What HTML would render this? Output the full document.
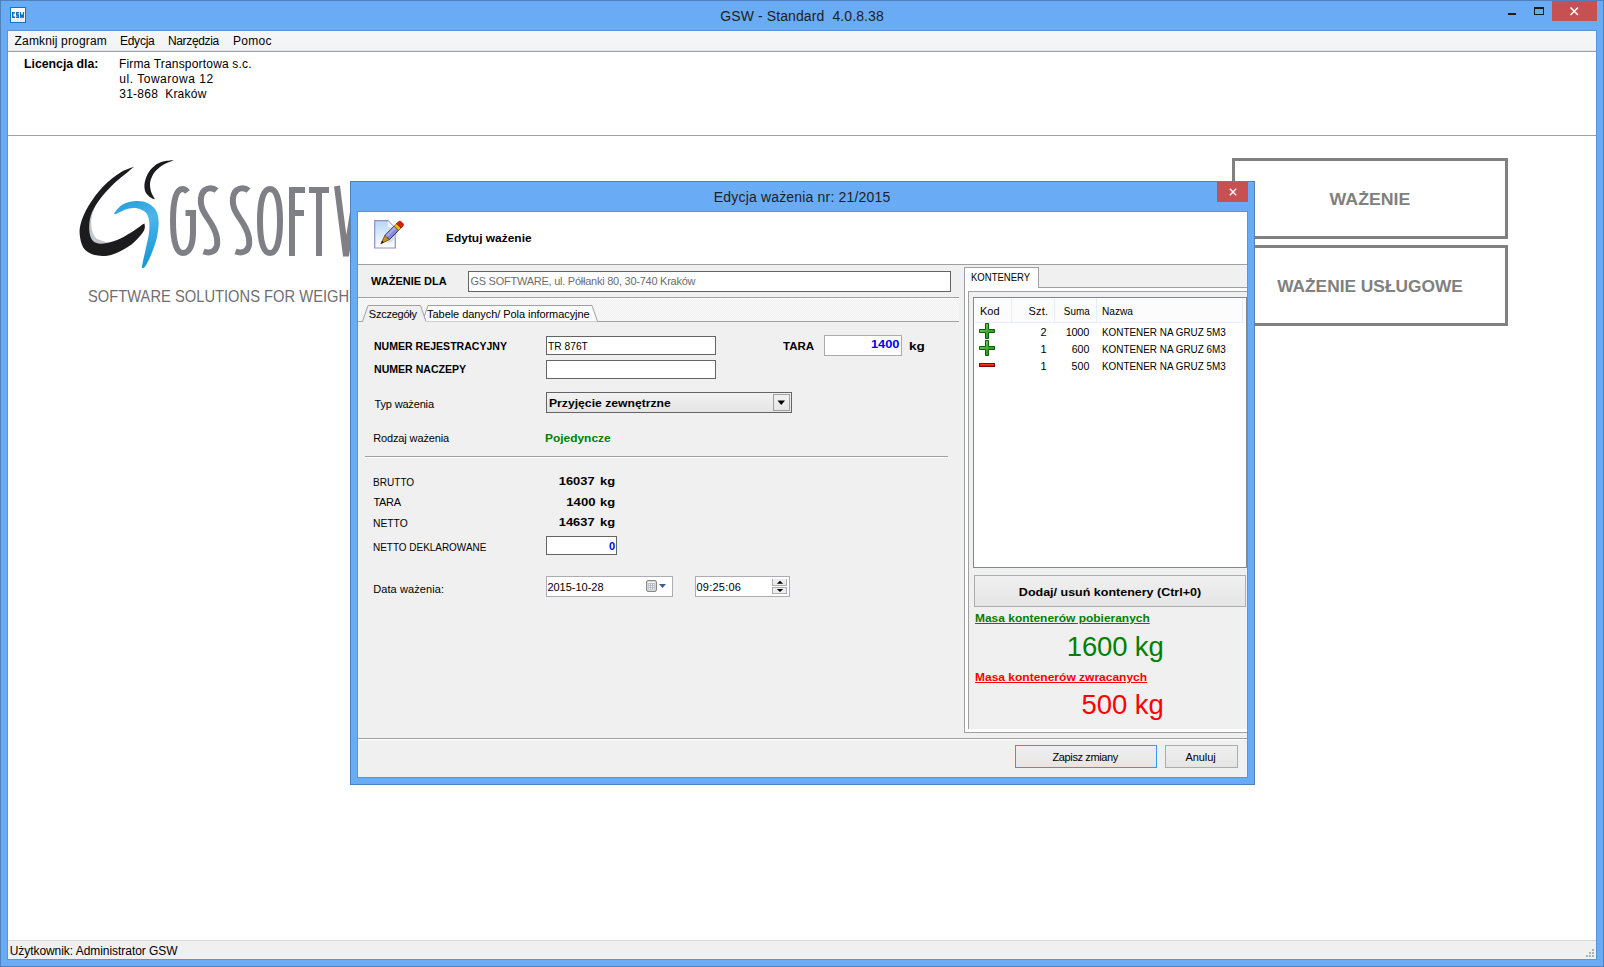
<!DOCTYPE html>
<html><head><meta charset="utf-8">
<style>
html,body{margin:0;padding:0;width:1604px;height:967px;overflow:hidden;background:#fff;}
body{position:relative;font-family:"Liberation Sans", sans-serif;}
.t{position:absolute;white-space:pre;}
.r{position:absolute;}
</style></head><body>
<div class="r" style="left:0px;top:0px;width:1604px;height:967px;background:#6aabf5;box-shadow:inset 0 0 0 1px #5081bb;"></div>
<div class="r" style="left:10px;top:7px;width:16px;height:16px;background:linear-gradient(#fff 40%,#e6e6e6);box-shadow:inset 0 0 0 1px #0a78c8;"></div>
<svg class="r" style="left:10px;top:7px" width="16" height="16" viewBox="10 7 16 16"><g fill="none" stroke="#0b6fc6" stroke-width="1.5"><path d="M15,12.75 H12.75 V17.25 H15"/><path d="M19,12.75 H16.75 V15 H18.25 V17.25 H16"/><path d="M20.4,12 L20.8,18 L22,15.2 L23.2,18 L23.6,12" stroke-width="1.3"/></g></svg>
<div class="t" style="top:6.65px;font-size:14px;line-height:18px;color:#1e1e1e;letter-spacing:0.100px;left:502.05px;width:600px;text-align:center;">GSW - Standard&nbsp; 4.0.8.38</div>
<div class="r" style="left:1508px;top:13px;width:8px;height:2px;background:#1a1a1a;"></div>
<div class="r" style="left:1534px;top:7px;width:10px;height:8px;box-sizing:border-box;border:1px solid #1a1a1a;border-top-width:2px;"></div>
<div class="r" style="left:1552px;top:1px;width:45px;height:20px;background:#c75050;"></div>
<svg class="r" style="left:1567px;top:4px" width="14" height="14" viewBox="0 0 14 14"><path d="M3.5 3.5 L11 11 M11 3.5 L3.5 11" stroke="#fff" stroke-width="1.5"/></svg>
<div class="r" style="left:8px;top:31px;width:1588px;height:928px;background:#fff;box-shadow:0 0 0 1px #5b93d6;"></div>
<div class="r" style="left:8px;top:31px;width:1588px;height:20px;background:linear-gradient(#f5f6f7,#f2f3f5);"></div>
<div class="r" style="left:8px;top:50px;width:1588px;height:1px;background:#e3e4e6;"></div>
<div class="r" style="left:8px;top:51px;width:1588px;height:1px;background:#a0a0a0;"></div>
<div class="t" style="top:34.34px;font-size:12px;line-height:15px;color:#000;letter-spacing:0.150px;left:14.58px;">Zamknij program</div>
<div class="t" style="top:34.34px;font-size:12px;line-height:15px;color:#000;letter-spacing:-0.219px;left:119.88px;">Edycja</div>
<div class="t" style="top:34.34px;font-size:12px;line-height:15px;color:#000;letter-spacing:-0.325px;left:167.88px;">Narzędzia</div>
<div class="t" style="top:34.34px;font-size:12px;line-height:15px;color:#000;letter-spacing:0.349px;left:232.88px;">Pomoc</div>
<div class="t" style="top:57.34px;font-size:12px;line-height:15px;color:#000;font-weight:bold;left:23.61px;transform:scaleX(1.0241);transform-origin:left;">Licencja dla:</div>
<div class="t" style="top:57.34px;font-size:12px;line-height:15px;color:#000;letter-spacing:0.181px;left:118.88px;">Firma Transportowa s.c.</div>
<div class="t" style="top:71.94px;font-size:12px;line-height:15px;color:#000;letter-spacing:0.538px;left:119.23px;">ul. Towarowa 12</div>
<div class="t" style="top:86.84px;font-size:12px;line-height:15px;color:#000;letter-spacing:0.229px;left:119.31px;">31-868&nbsp; Kraków</div>
<div class="r" style="left:8px;top:135px;width:1588px;height:1px;background:#a0a0a0;"></div>
<div class="r" style="left:8px;top:940px;width:1588px;height:1px;background:#d7d7d7;"></div>
<div class="r" style="left:8px;top:941px;width:1588px;height:18px;background:#f0f0f0;"></div>
<div class="t" style="top:943.74px;font-size:12px;line-height:15px;color:#000;letter-spacing:-0.051px;left:9.65px;">Użytkownik: Administrator GSW</div>
<div class="r" style="left:1592px;top:949px;width:2px;height:2px;background:#b0b0b0;"></div>
<div class="r" style="left:1589px;top:952px;width:2px;height:2px;background:#b0b0b0;"></div>
<div class="r" style="left:1592px;top:952px;width:2px;height:2px;background:#b0b0b0;"></div>
<div class="r" style="left:1586px;top:955px;width:2px;height:2px;background:#b0b0b0;"></div>
<div class="r" style="left:1589px;top:955px;width:2px;height:2px;background:#b0b0b0;"></div>
<div class="r" style="left:1592px;top:955px;width:2px;height:2px;background:#b0b0b0;"></div>
<svg class="r" style="left:0;top:140px" width="360" height="140" viewBox="0 140 360 140">
<defs><linearGradient id="bl" x1="0" y1="0" x2="0.3" y2="1"><stop offset="0" stop-color="#1f9bd9"/><stop offset="0.45" stop-color="#4fb5e8"/><stop offset="1" stop-color="#1c9ad8"/></linearGradient></defs>
<path d="M96.0,205.0 C95.2,206.3 91.8,211.2 90.5,215.0 C89.2,218.8 88.3,224.1 88.5,228.0 C88.7,231.9 89.9,235.9 91.5,238.5 C93.1,241.1 94.9,242.7 98.0,243.5 C101.1,244.3 109.0,243.8 110.0,243.5 C111.0,243.2 106.3,242.4 104.0,241.5 C101.7,240.6 98.0,239.9 96.0,238.0 C94.0,236.1 92.8,233.3 92.0,230.0 C91.2,226.7 91.0,221.8 91.5,218.0 C92.0,214.2 94.2,209.2 95.0,207.0 C95.8,204.8 96.8,203.7 96.0,205.0 Z" fill="#c3c7cd"/>
<path d="M134.2,166.8 C132.1,167.6 125.6,169.3 120.5,172.5 C115.4,175.7 108.7,180.7 103.4,186.2 C98.1,191.7 92.5,199.2 88.7,205.5 C84.9,211.8 82.1,218.4 80.7,223.7 C79.3,229.0 79.3,233.0 80.1,237.4 C80.8,241.8 82.2,246.9 85.2,249.9 C88.2,252.9 93.2,254.8 97.8,255.6 C102.3,256.4 107.4,255.9 112.5,254.4 C117.6,252.9 124.1,249.3 128.5,246.5 C132.9,243.7 136.1,240.2 138.7,237.4 C141.3,234.7 143.2,232.2 144.2,230.0 C145.2,227.8 144.8,225.5 144.6,224.5 C144.4,223.5 145.0,223.0 143.3,224.0 C141.6,225.0 138.0,228.1 134.2,230.5 C130.4,232.9 125.0,236.4 120.5,238.5 C116.0,240.6 110.9,242.3 106.9,243.1 C102.9,243.9 99.3,244.0 96.6,243.1 C93.9,242.2 92.1,240.2 90.9,237.4 C89.7,234.6 89.0,230.2 89.2,226.0 C89.4,221.8 90.0,217.1 92.0,212.3 C94.0,207.6 97.4,202.4 101.2,197.5 C105.0,192.6 110.2,187.2 114.8,182.8 C119.3,178.5 125.5,174.0 128.5,171.4 C131.5,168.8 132.1,168.3 133.0,167.5 C133.9,166.7 136.3,166.0 134.2,166.8 Z" fill="#1c1b1d"/>
<path d="M173.5,160.2 C172.7,160.0 166.2,160.6 163.0,161.5 C159.8,162.4 157.1,163.7 154.6,165.7 C152.1,167.7 149.5,170.5 147.8,173.7 C146.1,176.9 144.6,181.6 144.4,185.0 C144.2,188.4 145.0,191.7 146.7,194.1 C148.4,196.5 153.8,199.7 154.6,199.3 C155.3,198.9 151.9,194.7 151.2,191.9 C150.4,189.2 149.7,185.8 150.1,182.8 C150.5,179.8 151.8,176.4 153.5,173.7 C155.2,171.0 157.9,168.7 160.3,166.8 C162.7,164.9 165.8,163.6 168.0,162.5 C170.2,161.4 174.3,160.4 173.5,160.2 Z" fill="#1c1b1d"/>
<path d="M114.8,212.3 C116.1,210.7 119.2,206.3 122.8,204.4 C126.4,202.5 132.2,201.2 136.4,201.0 C140.6,200.8 144.6,201.7 147.8,203.2 C151.0,204.7 154.0,207.1 155.8,210.1 C157.6,213.1 158.4,216.8 158.6,221.4 C158.8,226.0 158.1,231.9 156.9,237.4 C155.7,242.9 153.1,249.6 151.2,254.4 C149.3,259.2 146.9,263.7 145.5,266.0 C144.1,268.3 143.1,268.0 142.5,268.0 C141.9,268.0 141.6,268.8 142.1,265.8 C142.6,262.8 144.3,255.4 145.5,249.9 C146.7,244.4 148.4,237.7 149.0,232.8 C149.6,227.9 149.6,223.7 149.0,220.3 C148.4,216.9 147.4,214.3 145.5,212.3 C143.6,210.3 140.6,209.0 137.6,208.4 C134.6,207.8 130.5,208.2 127.3,208.9 C124.1,209.7 120.2,212.0 118.2,212.9 C116.2,213.8 115.8,214.3 115.2,214.2 C114.6,214.1 113.5,213.9 114.8,212.3 Z" fill="url(#bl)"/>
<g fill="none" stroke="#7e8085" stroke-width="6">
<path d="M187.5,192 C185.5,189.5 184,189 182.5,189 C176,189 173,201 173,221 C173,244 177,253 183,253 C189,253 193,246 193,232 L193,213 L185.5,213"/>
<path d="M216.5,190.5 C213,187.5 208,187.5 205,190 C201,193 200,200 201.5,206 C203,213 208,218 212,225 C216,232 218,238 217,245 C216,251 211,254 203.5,251.5"/>
<path d="M248.5,190.5 C245,187.5 240,187.5 237,190 C233,193 232,200 233.5,206 C235,213 240,218 244,225 C248,232 250,238 249,245 C248,251 243,254 235.5,251.5"/>
<path d="M270,189 C276.8,189 280,201 280,221 C280,241 276.8,253 270,253 C263.2,253 260,241 260,221 C260,201 263.2,189 270,189 Z"/>
<path d="M292,256 V190 H305 M292,213 H304"/>
<path d="M309,190 H329 M319,190 V256"/>
<path d="M337,186 L346,256 L353,212"/>
</g>
</svg>
<div class="t" style="top:285.58px;font-size:16.5px;line-height:21px;color:#6e6e6e;left:88.40px;transform:scaleX(0.892);transform-origin:left;">SOFTWARE SOLUTIONS FOR WEIGHING</div>
<div class="r" style="left:1232px;top:158px;width:276px;height:81px;box-sizing:border-box;border:3px solid #808080;background:#fff;"></div>
<div class="r" style="left:1232px;top:245px;width:276px;height:81px;box-sizing:border-box;border:3px solid #808080;background:#fff;"></div>
<div class="t" style="top:188.78px;font-size:16.5px;line-height:21px;color:#808080;font-weight:bold;left:1070.00px;width:600px;text-align:center;transform:scaleX(1.0745);transform-origin:center;">WAŻENIE</div>
<div class="t" style="top:275.78px;font-size:16.5px;line-height:21px;color:#808080;font-weight:bold;left:1070.00px;width:600px;text-align:center;transform:scaleX(1.0498);transform-origin:center;">WAŻENIE USŁUGOWE</div>
<div class="r" style="left:350px;top:181px;width:905px;height:604px;background:#6aabf5;box-shadow:inset 0 0 0 1px #5081bb;"></div>
<div class="t" style="top:187.55px;font-size:14px;line-height:18px;color:#1e1e1e;letter-spacing:0.174px;left:502.09px;width:600px;text-align:center;">Edycja ważenia nr: 21/2015</div>
<div class="r" style="left:1217px;top:182px;width:31px;height:20px;background:#c75050;"></div>
<svg class="r" style="left:1227px;top:186px" width="12" height="12" viewBox="0 0 12 12"><path d="M2.8 2.8 L9.2 9.2 M9.2 2.8 L2.8 9.2" stroke="#fff" stroke-width="1.45"/></svg>
<div class="r" style="left:358px;top:212px;width:889px;height:565px;background:#f0f0f0;box-shadow:0 0 0 1px #5b93d6;"></div>
<div class="r" style="left:358px;top:212px;width:889px;height:52px;background:#fff;"></div>
<div class="r" style="left:358px;top:264px;width:889px;height:1px;background:#a0a0a0;"></div>
<div class="t" style="top:231.32px;font-size:11.5px;line-height:14px;color:#000;font-weight:bold;left:446.21px;transform:scaleX(1.0383);transform-origin:left;">Edytuj ważenie</div>
<svg class="r" style="left:370px;top:216px" width="40" height="38" viewBox="370 216 40 38">
<defs><linearGradient id="dg" x1="0" y1="0" x2="0" y2="1"><stop offset="0" stop-color="#b6d6f8"/><stop offset="1" stop-color="#ffffff"/></linearGradient>
<linearGradient id="pg" x1="0" y1="0" x2="1" y2="1"><stop offset="0" stop-color="#a8aaf0"/><stop offset="1" stop-color="#6e70b8"/></linearGradient></defs>
<path d="M374.7,220.7 H387.8 L395.3,228.2 V248 H374.7 Z" fill="url(#dg)" stroke="#8e90c2" stroke-width="1.2"/>
<path d="M387.8,221 L388,227 L394.5,227.8 Z" fill="#f4f8fd"/>
<path d="M386,243 L398,231 L396,237 L391,242 Z" fill="#c8ccd6" opacity="0.6"/>
<path d="M380.80,243.80 L384.97,235.24 L389.36,239.63 Z" fill="#c8901c" stroke="#5a3a08" stroke-width="0.7"/>
<path d="M380.80,243.80 L382.28,240.76 L383.84,242.32 Z" fill="#111"/>
<path d="M384.97,235.24 L394.16,226.05 L398.55,230.44 L389.36,239.63 Z" fill="url(#pg)" stroke="#2c2c60" stroke-width="0.9"/>
<path d="M385.54,235.81 L394.73,226.62 L396.14,228.03 L386.95,237.22 Z" fill="#b4b6f4" opacity="0.7"/>
<path d="M394.16,226.05 L396.64,223.58 L401.02,227.96 L398.55,230.44 Z" fill="#f5b800" stroke="#6a4a00" stroke-width="0.7"/>
<path d="M396.64,223.58 L398.76,221.46 L400.60,221.17 L403.43,224.00 L403.14,225.84 L401.02,227.96 Z" fill="#e01c00" stroke="#701000" stroke-width="0.7"/>
</svg>
<div class="t" style="top:274.19px;font-size:11px;line-height:14px;color:#000;font-weight:bold;left:370.78px;transform:scaleX(0.9983);transform-origin:left;">WAŻENIE DLA</div>
<div class="r" style="left:468px;top:271px;width:483px;height:21px;box-sizing:border-box;border:1px solid #646464;background:#fff;"></div>
<div class="t" style="top:274.19px;font-size:11px;line-height:14px;color:#6d6d6d;letter-spacing:-0.248px;left:470.39px;">GS SOFTWARE, ul. Półłanki 80, 30-740 Kraków</div>
<div class="r" style="left:358px;top:297px;width:601px;height:25px;background-color:#f0f0f0;background-image:repeating-conic-gradient(#fafafa 0 25%, #f0f0f0 0 50%);background-size:2px 2px;"></div>
<div class="r" style="left:358px;top:297px;width:601px;height:1px;background:#a0a0a0;"></div>
<div class="r" style="left:358px;top:298px;width:601px;height:1px;background:#fcfcfc;"></div>
<div class="r" style="left:358px;top:321px;width:601px;height:1px;background:#a0a0a0;"></div>
<svg class="r" style="left:358px;top:304px" width="260" height="19" viewBox="0 0 260 19"><path d="M64.5,17.5 L70,1.5 L234,1.5 L239.5,17.5 Z" fill="#fbfbfb" stroke="none"/><path d="M64.5,17.5 L70,1.5 L234,1.5 L239.5,17.5" fill="none" stroke="#a0a0a0" stroke-width="1"/><path d="M4.5,18 L10,1.5 L62.5,1.5 L68.5,18 Z" fill="#f0f0f0" stroke="none"/><path d="M4.5,17.5 L10,1.5 L62.5,1.5 L68,17.5" fill="none" stroke="#a0a0a0" stroke-width="1"/></svg>
<div class="t" style="top:306.69px;font-size:11px;line-height:14px;color:#000;letter-spacing:-0.259px;left:368.86px;">Szczegóły</div>
<div class="t" style="top:306.69px;font-size:11px;line-height:14px;color:#000;letter-spacing:-0.062px;left:427.11px;">Tabele danych/ Pola informacyjne</div>
<div class="t" style="top:339.19px;font-size:11px;line-height:14px;color:#000;font-weight:bold;left:374.30px;transform:scaleX(0.9583);transform-origin:left;">NUMER REJESTRACYJNY</div>
<div class="r" style="left:546px;top:336px;width:170px;height:19px;box-sizing:border-box;border:1px solid #646464;background:#fff;"></div>
<div class="t" style="top:338.69px;font-size:11px;line-height:14px;color:#000;left:547.54px;transform:scaleX(0.9306);transform-origin:left;">TR 876T</div>
<div class="t" style="top:339.19px;font-size:11px;line-height:14px;color:#000;font-weight:bold;left:783.27px;transform:scaleX(1.0470);transform-origin:left;">TARA</div>
<div class="r" style="left:824px;top:335px;width:78px;height:21px;box-sizing:border-box;border:1px solid #ababab;background:#fff;"></div>
<div class="t" style="top:337.19px;font-size:11px;line-height:14px;color:#0000ff;font-weight:bold;right:704.77px;text-align:right;transform:scaleX(1.1658);transform-origin:right;">1400</div>
<div class="t" style="top:339.19px;font-size:11px;line-height:14px;color:#000;font-weight:bold;left:909.07px;transform:scaleX(1.2302);transform-origin:left;">kg</div>
<div class="t" style="top:362.19px;font-size:11px;line-height:14px;color:#000;font-weight:bold;left:374.30px;transform:scaleX(0.9605);transform-origin:left;">NUMER NACZEPY</div>
<div class="r" style="left:546px;top:360px;width:170px;height:19px;box-sizing:border-box;border:1px solid #646464;background:#fff;"></div>
<div class="t" style="top:396.59px;font-size:11px;line-height:14px;color:#000;letter-spacing:-0.165px;left:374.51px;">Typ ważenia</div>
<div class="r" style="left:546px;top:392px;width:246px;height:21px;box-sizing:border-box;border:1px solid #646464;background:linear-gradient(#f2f2f2,#e5e5e5);"></div>
<div class="r" style="left:773px;top:394px;width:17px;height:17px;box-sizing:border-box;border:1px solid #a0a0a0;background:linear-gradient(#f2f2f2,#e5e5e5);"></div>
<svg class="r" style="left:777px;top:400px" width="9" height="6" viewBox="0 0 9 6"><path d="M0.5 0.5 L8 0.5 L4.25 5 Z" fill="#000"/></svg>
<div class="t" style="top:396.19px;font-size:11px;line-height:14px;color:#000;font-weight:bold;left:549.19px;transform:scaleX(1.1065);transform-origin:left;">Przyjęcie zewnętrzne</div>
<div class="t" style="top:430.89px;font-size:11px;line-height:14px;color:#000;letter-spacing:-0.126px;left:373.17px;">Rodzaj ważenia</div>
<div class="t" style="top:431.19px;font-size:11px;line-height:14px;color:#008000;font-weight:bold;left:545.21px;transform:scaleX(1.0846);transform-origin:left;">Pojedyncze</div>
<div class="r" style="left:365px;top:456px;width:583px;height:1px;background:#a0a0a0;"></div>
<div class="r" style="left:365px;top:457px;width:583px;height:1px;background:#fff;"></div>
<div class="t" style="top:474.69px;font-size:11px;line-height:14px;color:#000;left:373.24px;transform:scaleX(0.9145);transform-origin:left;">BRUTTO</div>
<div class="t" style="top:474.09px;font-size:11px;line-height:14px;color:#000;font-weight:bold;right:1009.03px;text-align:right;transform:scaleX(1.1697);transform-origin:right;">16037</div>
<div class="t" style="top:474.09px;font-size:11px;line-height:14px;color:#000;font-weight:bold;left:600.11px;transform:scaleX(1.1775);transform-origin:left;">kg</div>
<div class="t" style="top:495.19px;font-size:11px;line-height:14px;color:#000;letter-spacing:-0.318px;left:373.51px;">TARA</div>
<div class="t" style="top:494.59px;font-size:11px;line-height:14px;color:#000;font-weight:bold;right:1008.65px;text-align:right;transform:scaleX(1.1917);transform-origin:right;">1400</div>
<div class="t" style="top:494.59px;font-size:11px;line-height:14px;color:#000;font-weight:bold;left:600.11px;transform:scaleX(1.1775);transform-origin:left;">kg</div>
<div class="t" style="top:515.79px;font-size:11px;line-height:14px;color:#000;left:373.22px;transform:scaleX(0.9373);transform-origin:left;">NETTO</div>
<div class="t" style="top:515.19px;font-size:11px;line-height:14px;color:#000;font-weight:bold;right:1009.03px;text-align:right;transform:scaleX(1.1697);transform-origin:right;">14637</div>
<div class="t" style="top:515.19px;font-size:11px;line-height:14px;color:#000;font-weight:bold;left:600.11px;transform:scaleX(1.1775);transform-origin:left;">kg</div>
<div class="t" style="top:540.19px;font-size:11px;line-height:14px;color:#000;left:373.25px;transform:scaleX(0.9046);transform-origin:left;">NETTO DEKLAROWANE</div>
<div class="r" style="left:546px;top:536px;width:71px;height:19px;box-sizing:border-box;border:1px solid #646464;background:#fff;"></div>
<div class="t" style="top:538.69px;font-size:11px;line-height:14px;color:#0000ff;font-weight:bold;right:989.00px;text-align:right;">0</div>
<div class="t" style="top:582.19px;font-size:11px;line-height:14px;color:#000;letter-spacing:0.091px;left:373.17px;">Data ważenia:</div>
<div class="r" style="left:546px;top:576px;width:127px;height:21px;box-sizing:border-box;border:1px solid #abadb3;background:#fff;"></div>
<div class="t" style="top:580.19px;font-size:11px;line-height:14px;color:#000;letter-spacing:-0.014px;left:547.40px;">2015-10-28</div>
<svg class="r" style="left:645px;top:579px" width="24" height="15" viewBox="645 579 24 15">
<rect x="646.7" y="580.7" width="9.6" height="10.6" rx="1.2" fill="#eef3fb" stroke="#756866" stroke-width="1"/>
<rect x="648.2" y="583" width="6.6" height="6.6" fill="#b8bcc4"/>
<g fill="#f4f6fa"><rect x="649" y="584" width="1" height="1"/><rect x="651" y="584" width="1" height="1"/><rect x="653" y="584" width="1" height="1"/>
<rect x="649" y="586" width="1" height="1"/><rect x="651" y="586" width="1" height="1"/><rect x="653" y="586" width="1" height="1"/>
<rect x="649" y="588" width="1" height="1"/><rect x="651" y="588" width="1" height="1"/><rect x="653" y="588" width="1" height="1"/></g>
<path d="M659,584 L666,584 L662.5,588 Z" fill="#3d5e8c"/>
</svg>
<div class="r" style="left:695px;top:576px;width:95px;height:21px;box-sizing:border-box;border:1px solid #abadb3;background:#fff;"></div>
<div class="t" style="top:580.19px;font-size:11px;line-height:14px;color:#000;letter-spacing:0.244px;left:696.46px;">09:25:06</div>
<div class="r" style="left:772px;top:579px;width:15px;height:7px;box-sizing:border-box;border:1px solid #adadad;border-top:none;background:#ececec;"></div>
<div class="r" style="left:772px;top:587px;width:15px;height:7px;box-sizing:border-box;border:1px solid #adadad;background:#ececec;"></div>
<svg class="r" style="left:776px;top:580px" width="8" height="13" viewBox="0 0 8 13"><path d="M0.8,3.8 L7.2,3.8 L4,0.8 Z M0.8,9 L7.2,9 L4,12 Z" fill="#000"/></svg>
<div class="r" style="left:964px;top:288px;width:283px;height:445px;box-sizing:border-box;border-left:1px solid #a0a0a0;border-bottom:1px solid #a0a0a0;background:#fff;"></div>
<div class="r" style="left:1038px;top:287px;width:209px;height:1px;background:#a0a0a0;"></div>
<div class="r" style="left:964px;top:267px;width:75px;height:21px;box-sizing:border-box;border:1px solid #a0a0a0;border-bottom:none;background:#fff;"></div>
<div class="t" style="top:270.09px;font-size:11px;line-height:14px;color:#000;left:971.28px;transform:scaleX(0.8671);transform-origin:left;">KONTENERY</div>
<div class="r" style="left:968px;top:291px;width:279px;height:438px;box-sizing:border-box;border-left:1px solid #a0a0a0;border-top:1px solid #a0a0a0;background:#f0f0f0;"></div>
<div class="r" style="left:973px;top:297px;width:274px;height:271px;box-sizing:border-box;border:1px solid #828790;background:#fff;"></div>
<div class="r" style="left:974px;top:298px;width:272px;height:24px;background:#fcfcfc;"></div>
<div class="r" style="left:975px;top:322px;width:269px;height:1px;background:#e5eefa;"></div>
<div class="r" style="left:1011px;top:298px;width:1px;height:24px;background:#e5eefa;"></div>
<div class="r" style="left:1054px;top:298px;width:1px;height:24px;background:#e5eefa;"></div>
<div class="r" style="left:1096px;top:298px;width:1px;height:24px;background:#e5eefa;"></div>
<div class="r" style="left:1242px;top:298px;width:1px;height:24px;background:#e5eefa;"></div>
<div class="t" style="top:303.79px;font-size:11px;line-height:14px;color:#000;left:979.77px;transform:scaleX(1.0011);transform-origin:left;">Kod</div>
<div class="t" style="top:303.79px;font-size:11px;line-height:14px;color:#000;letter-spacing:0.183px;right:555.76px;text-align:right;">Szt.</div>
<div class="t" style="top:303.79px;font-size:11px;line-height:14px;color:#000;right:513.95px;text-align:right;transform:scaleX(0.9016);transform-origin:right;">Suma</div>
<div class="t" style="top:303.79px;font-size:11px;line-height:14px;color:#000;left:1101.84px;transform:scaleX(0.9191);transform-origin:left;">Nazwa</div>
<div class="t" style="top:324.79px;font-size:11px;line-height:14px;color:#000;right:557.50px;text-align:right;">2</div>
<div class="t" style="top:324.79px;font-size:11px;line-height:14px;color:#000;letter-spacing:-0.289px;right:515.03px;text-align:right;">1000</div>
<div class="t" style="top:324.79px;font-size:11px;line-height:14px;color:#000;left:1101.95px;transform:scaleX(0.9002);transform-origin:left;">KONTENER NA GRUZ 5M3</div>
<svg class="r" style="left:978px;top:322px" width="18" height="18" viewBox="978 322 18 18"><defs><linearGradient id="gp0" x1="0" y1="0" x2="1" y2="1"><stop offset="0" stop-color="#9ae67a"/><stop offset="0.5" stop-color="#3fae34"/><stop offset="1" stop-color="#1f8a1c"/></linearGradient></defs><path d="M985.5,323.5 H988.5 V329.5 H994.5 V332.5 H988.5 V338.5 H985.5 V332.5 H979.5 V329.5 H985.5 Z" fill="url(#gp0)" stroke="#0b5e0b" stroke-width="1"/></svg>
<div class="t" style="top:341.79px;font-size:11px;line-height:14px;color:#000;right:557.50px;text-align:right;">1</div>
<div class="t" style="top:341.79px;font-size:11px;line-height:14px;color:#000;right:514.88px;text-align:right;transform:scaleX(0.9655);transform-origin:right;">600</div>
<div class="t" style="top:341.79px;font-size:11px;line-height:14px;color:#000;left:1101.95px;transform:scaleX(0.9002);transform-origin:left;">KONTENER NA GRUZ 6M3</div>
<svg class="r" style="left:978px;top:339px" width="18" height="18" viewBox="978 339 18 18"><defs><linearGradient id="gp1" x1="0" y1="0" x2="1" y2="1"><stop offset="0" stop-color="#9ae67a"/><stop offset="0.5" stop-color="#3fae34"/><stop offset="1" stop-color="#1f8a1c"/></linearGradient></defs><path d="M985.5,340.5 H988.5 V346.5 H994.5 V349.5 H988.5 V355.5 H985.5 V349.5 H979.5 V346.5 H985.5 Z" fill="url(#gp1)" stroke="#0b5e0b" stroke-width="1"/></svg>
<div class="t" style="top:358.79px;font-size:11px;line-height:14px;color:#000;right:557.50px;text-align:right;">1</div>
<div class="t" style="top:358.79px;font-size:11px;line-height:14px;color:#000;right:514.88px;text-align:right;transform:scaleX(0.9677);transform-origin:right;">500</div>
<div class="t" style="top:358.79px;font-size:11px;line-height:14px;color:#000;left:1101.95px;transform:scaleX(0.9002);transform-origin:left;">KONTENER NA GRUZ 5M3</div>
<svg class="r" style="left:978px;top:359px" width="18" height="12" viewBox="978 359 18 12"><defs><linearGradient id="gm" x1="0" y1="0" x2="0" y2="1"><stop offset="0" stop-color="#ff7a50"/><stop offset="0.5" stop-color="#e8200c"/><stop offset="1" stop-color="#b01000"/></linearGradient></defs><rect x="979.5" y="363.5" width="15" height="3" fill="url(#gm)" stroke="#7e0a00" stroke-width="1"/></svg>
<div class="r" style="left:974px;top:575px;width:272px;height:32px;box-sizing:border-box;border:1px solid #acacac;background:linear-gradient(#f0f0f0,#e5e5e5);"></div>
<div class="t" style="top:584.79px;font-size:11px;line-height:14px;color:#000;font-weight:bold;left:810.40px;width:600px;text-align:center;transform:scaleX(1.1358);transform-origin:center;">Dodaj/ usuń kontenery (Ctrl+0)</div>
<div class="t" style="top:611.19px;font-size:11px;line-height:14px;color:#008000;font-weight:bold;left:974.51px;transform:scaleX(1.0869);transform-origin:left;text-decoration:underline;">Masa kontenerów pobieranych</div>
<div class="t" style="top:630.47px;font-size:27.5px;line-height:34px;color:#008000;letter-spacing:-0.161px;right:440.44px;text-align:right;">1600 kg</div>
<div class="t" style="top:670.19px;font-size:11px;line-height:14px;color:#ff0000;font-weight:bold;left:974.50px;transform:scaleX(1.0911);transform-origin:left;text-decoration:underline;">Masa kontenerów zwracanych</div>
<div class="t" style="top:688.07px;font-size:27.5px;line-height:34px;color:#ff0000;letter-spacing:-0.075px;right:440.28px;text-align:right;">500 kg</div>
<div class="r" style="left:358px;top:738px;width:889px;height:1px;background:#a0a0a0;"></div>
<div class="r" style="left:358px;top:739px;width:889px;height:1px;background:#fff;"></div>
<div class="r" style="left:1015px;top:745px;width:142px;height:23px;box-sizing:border-box;border:1px solid #3399ff;background:linear-gradient(#f0f0f0,#e5e5e5);"></div>
<div class="t" style="top:750.19px;font-size:11px;line-height:14px;color:#000;letter-spacing:-0.374px;left:785.21px;width:600px;text-align:center;">Zapisz zmiany</div>
<div class="r" style="left:1165px;top:745px;width:73px;height:23px;box-sizing:border-box;border:1px solid #acacac;background:linear-gradient(#f0f0f0,#e5e5e5);"></div>
<div class="t" style="top:750.19px;font-size:11px;line-height:14px;color:#000;letter-spacing:-0.105px;left:900.55px;width:600px;text-align:center;">Anuluj</div>
</body></html>
